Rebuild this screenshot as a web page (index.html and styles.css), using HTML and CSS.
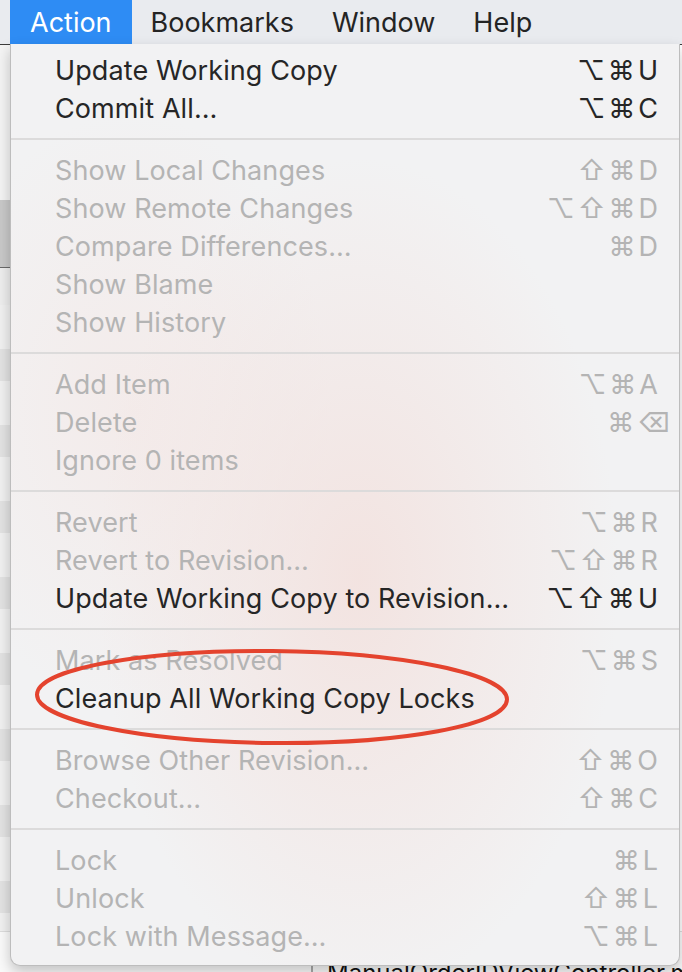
FILE: index.html
```html
<!DOCTYPE html>
<html lang="en">
<head>
    <meta charset="UTF-8">
    <meta name="viewport" content="width=device-width, initial-scale=1.0">
    <title>Action menu</title>
    <link rel="stylesheet" href="styles.css">
</head>
<body>
    <div class="menubar">
        <span class="bar-item active">Action</span>
        <span class="bar-item">Bookmarks</span>
        <span class="bar-item">Window</span>
        <span class="bar-item">Help</span>
    </div>

    <!-- app window behind the menu -->
    <div class="app">
        <div class="app-side"></div>
        <div class="app-bottom">
            <span class="col"></span>
            <span class="col"></span>
            <span class="col"></span>
            <span class="check"></span>
            <span class="file">ManualOrderIDViewController.m</span>
        </div>
    </div>

    <ul class="menu">
        <li class="item"><span>Update Working Copy</span><span class="keys">⌥⌘U</span></li>
        <li class="item"><span>Commit All…</span><span class="keys">⌥⌘C</span></li>
        <li class="sep"></li>
        <li class="item off"><span>Show Local Changes</span><span class="keys">⇧⌘D</span></li>
        <li class="item off"><span>Show Remote Changes</span><span class="keys">⌥⇧⌘D</span></li>
        <li class="item off"><span>Compare Differences…</span><span class="keys">⌘D</span></li>
        <li class="item off"><span>Show Blame</span><span class="keys"></span></li>
        <li class="item off"><span>Show History</span><span class="keys"></span></li>
        <li class="sep"></li>
        <li class="item off"><span>Add Item</span><span class="keys">⌥⌘A</span></li>
        <li class="item off"><span>Delete</span><span class="keys del">⌘⌫</span></li>
        <li class="item off"><span>Ignore 0 items</span><span class="keys"></span></li>
        <li class="sep"></li>
        <li class="item off"><span>Revert</span><span class="keys">⌥⌘R</span></li>
        <li class="item off"><span>Revert to Revision…</span><span class="keys">⌥⇧⌘R</span></li>
        <li class="item"><span>Update Working Copy to Revision…</span><span class="keys">⌥⇧⌘U</span></li>
        <li class="sep"></li>
        <li class="item off"><span>Mark as Resolved</span><span class="keys">⌥⌘S</span></li>
        <li class="item"><span>Cleanup All Working Copy Locks</span><span class="keys"></span></li>
        <li class="sep"></li>
        <li class="item off"><span>Browse Other Revision…</span><span class="keys">⇧⌘O</span></li>
        <li class="item off"><span>Checkout…</span><span class="keys">⇧⌘C</span></li>
        <li class="sep"></li>
        <li class="item off"><span>Lock</span><span class="keys">⌘L</span></li>
        <li class="item off"><span>Unlock</span><span class="keys">⇧⌘L</span></li>
        <li class="item off"><span>Lock with Message…</span><span class="keys">⌥⌘L</span></li>
    </ul>

    <!-- hand drawn highlight -->
    <svg class="circle" width="482" height="104" viewBox="0 0 482 104">
        <ellipse cx="239" cy="51" rx="235" ry="46" fill="none" stroke="#e4432e" stroke-width="4" transform="rotate(0.6 239 51)"/>
    </svg>
</body>
</html>
```

FILE: styles.css
```css
body {
    margin: 0;
    width: 682px;
    height: 972px;
    overflow: hidden;
    position: relative;
    background: #ffffff;
    font-family: Inter, Roboto, "Liberation Sans", sans-serif;
}
.menubar {
    height: 44px;
    display: flex;
    padding-left: 10px;
    background: #e9ebef;
    border-bottom: 1px solid #3c3c3c;
}
.bar-item {
    padding: 0 19px;
    font-size: 27px;
    line-height: 45px;
    color: #242424;
}
.bar-item.active {
    background: #2e8cf4;
    color: #fff;
    padding: 0 20px;
}
.app {
    display: flex;
    flex-direction: column;
    height: 927px;
}
.app-side {
    flex: 1;
    width: 12px;
    background: linear-gradient(#f4f4f4 0 155px, #c9c9c9 155px 222px, #6a6a6a 222px 223px, #eeeeee 223px);
    position: relative;
}
.app-side::after {
    content: "";
    position: absolute;
    inset: 260px 0 0 0;
    background: repeating-linear-gradient(#f1f1f1 0 44px, #e3e3e3 44px 76px);
}
.app-bottom {
    height: 40px;
    display: flex;
    align-items: flex-end;
    background: #fafafa;
    border-top: 1px solid #ddd;
}
.app-bottom .col {
    width: 1px;
    height: 30px;
    background: #b9b9b9;
    margin-left: 55px;
}
.app-bottom .col:first-child {
    margin-left: 160px;
}
.app-bottom .col:nth-child(3) {
    margin-left: 84px;
}
.app-bottom .check {
    width: 10px;
    height: 12px;
    border: 1px solid #aaa;
    border-radius: 2px;
    margin: 0 0 -2px 12px;
}
.app-bottom .file {
    font-size: 24px;
    color: #111;
    margin-left: 14px;
    line-height: 22px;
    margin-bottom: -12px;
}

.menu {
    position: absolute;
    top: 44px;
    left: 10px;
    width: 670px;
    margin: 0;
    padding: 7px 0 10px;
    list-style: none;
    box-sizing: border-box;
    border: 1px solid #bdbdbd;
    border-top: 0;
    border-radius: 0 0 10px 10px;
    background:
        radial-gradient(ellipse 260px 420px at 52% 58%, rgba(243, 222, 218, 0.75), rgba(243, 228, 226, 0) 100%),
        radial-gradient(ellipse 200px 300px at 18% 40%, rgba(244, 232, 230, 0.7), rgba(244, 232, 230, 0) 100%),
        #f2f2f3;
    box-shadow: 0 6px 14px rgba(0, 0, 0, 0.22);
}
.item {
    display: flex;
    justify-content: space-between;
    align-items: center;
    height: 38px;
    padding: 0 21px 0 44px;
    font-size: 27px;
    letter-spacing: 0.1px;
    color: #262626;
}
.item.off {
    color: #b4b4b4;
}
.keys {
    font-family: Inter, "DejaVu Sans", sans-serif;
    font-size: 27px;
    letter-spacing: 3px;
    margin-right: -3px;
}
.keys.del {
    margin-right: -15px;
}
.sep {
    height: 2px;
    margin: 11px 0;
    background: #dcdbdb;
}
.circle {
    position: absolute;
    left: 33px;
    top: 646px;
}
```
